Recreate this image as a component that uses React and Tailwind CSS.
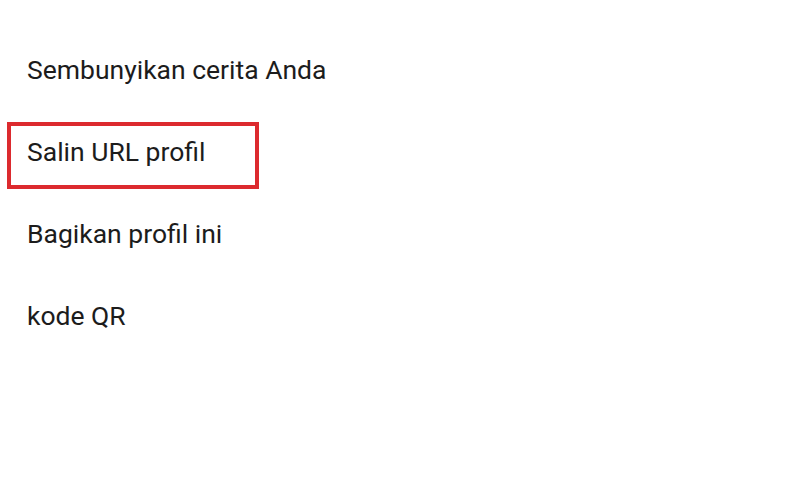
export default function App() {
  const items = ['Sembunyikan cerita Anda', 'Salin URL profil', 'Bagikan profil ini', 'kode QR']

  return (
    <div className="w-[800px] h-[500px] bg-white overflow-hidden font-['Roboto',sans-serif] text-[#1c1c1c]">
      <div className="flex flex-col pt-[29px]">
        {items.map((label, i) => (
          <div key={label} className="h-[82px] flex items-center">
            {i === 1 ? (
              <div className="ml-[7px] mt-[7px] w-[252px] h-[67px] border-4 border-[#dc2a2e] flex items-center pl-4 pb-[6px]">
                <span className="text-[26.5px] leading-none">{label}</span>
              </div>
            ) : (
              <span className="pl-[27px] text-[26.5px] leading-none">{label}</span>
            )}
          </div>
        ))}
      </div>
    </div>
  )
}
